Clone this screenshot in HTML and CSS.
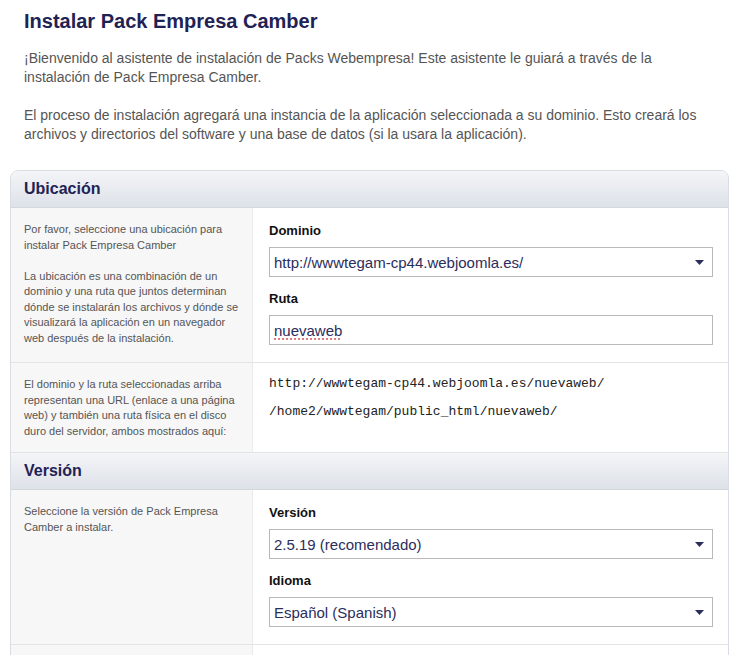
FILE: index.html
```html
<!DOCTYPE html>
<html lang="es">
<head>
  <meta charset="UTF-8" />
  <meta name="viewport" content="width=device-width, initial-scale=1.0"/>
  <title>Instalar Pack Empresa Camber</title>
  <link rel="stylesheet" href="styles.css">
</head>
<body>

  <div class="page">
    <div class="intro">
      <h1>Instalar Pack Empresa Camber</h1>
      <p>¡Bienvenido al asistente de instalación de Packs Webempresa! Este asistente le guiará a través de la instalación de Pack Empresa Camber.</p>
      <p>El proceso de instalación agregará una instancia de la aplicación seleccionada a su dominio. Esto creará los archivos y directorios del software y una base de datos (si la usara la aplicación).</p>
    </div>

    <div class="panel">
      <!-- Ubicacion -->
      <div class="panel-header">Ubicación</div>

      <div class="row">
        <div class="help">
          <p>Por favor, seleccione una ubicación para instalar Pack Empresa Camber</p>
          <p>La ubicación es una combinación de un dominio y una ruta que juntos determinan dónde se instalarán los archivos y dónde se visualizará la aplicación en un navegador web después de la instalación.</p>
        </div>
        <div class="fields">
          <label>Dominio</label>
          <div class="select">
            <span>http://wwwtegam-cp44.webjoomla.es/</span>
            <svg class="arrow" width="9" height="5" viewBox="0 0 9 5"><path d="M0 0h9L4.5 5z" fill="#2b2d5c"/></svg>
          </div>
          <label>Ruta</label>
          <div class="input"><span class="misspelled">nuevaweb</span></div>
        </div>
      </div>

      <div class="row">
        <div class="help">
          <p>El dominio y la ruta seleccionadas arriba representan una URL (enlace a una página web) y también una ruta física en el disco duro del servidor, ambos mostrados aquí:</p>
        </div>
        <div class="fields paths">
          <div class="path">http://wwwtegam-cp44.webjoomla.es/nuevaweb/</div>
          <div class="path">/home2/wwwtegam/public_html/nuevaweb/</div>
        </div>
      </div>

      <!-- Version -->
      <div class="panel-header">Versión</div>

      <div class="row">
        <div class="help">
          <p>Seleccione la versión de Pack Empresa Camber a instalar.</p>
        </div>
        <div class="fields">
          <label>Versión</label>
          <div class="select">
            <span>2.5.19 (recomendado)</span>
            <svg class="arrow" width="9" height="5" viewBox="0 0 9 5"><path d="M0 0h9L4.5 5z" fill="#2b2d5c"/></svg>
          </div>
          <label>Idioma</label>
          <div class="select">
            <span>Español (Spanish)</span>
            <svg class="arrow" width="9" height="5" viewBox="0 0 9 5"><path d="M0 0h9L4.5 5z" fill="#2b2d5c"/></svg>
          </div>
        </div>
      </div>

      <div class="row">
        <div class="help"><p>&nbsp;</p></div>
        <div class="fields"></div>
      </div>
    </div>
  </div>

</body>
</html>
```

FILE: styles.css
```css
body {
  font-family: 'Liberation Sans', Arial, Helvetica, sans-serif;
  background-color: #fff;
  margin: 0;
  padding: 0;
}

.page {
  padding: 9px 9px 0 10px;
}

.intro {
  padding: 0 14px;
}

h1 {
  margin: 0 0 16px;
  font-size: 20px;
  line-height: 24px;
  color: #1f2254;
}

.intro p {
  margin: 0 0 19px;
  font-size: 14px;
  line-height: 19px;
  color: #555;
}

.intro p:last-child {
  margin-bottom: 26px;
}

.panel {
  border: 1px solid #d9dce2;
  border-radius: 8px 8px 0 0;
  overflow: hidden;
}

.panel-header {
  height: 36px;
  line-height: 36px;
  padding-left: 13px;
  font-size: 16px;
  font-weight: bold;
  color: #1f2254;
  background: linear-gradient(#f4f5f8, #dde1e8);
  border-bottom: 1px solid #d3d7de;
}

.row {
  display: grid;
  grid-template-columns: 242px 1fr;
  border-bottom: 1px solid #e4e4e4;
}

.row:last-child {
  border-bottom: none;
}

.help {
  background-color: #f7f7f7;
  border-right: 1px solid #ebebeb;
  padding: 14px 10px 13px 13px;
}

.help p {
  margin: 0 0 15.5px;
  font-size: 11px;
  line-height: 15.5px;
  color: #555;
}

.help p:last-child {
  margin-bottom: 0;
}

.fields {
  padding: 14px 15px 17px 16px;
}

.fields label {
  display: block;
  font-size: 13px;
  font-weight: bold;
  line-height: 18px;
  color: #111;
  margin-bottom: 7px;
}

.select,
.input {
  display: flex;
  align-items: center;
  justify-content: space-between;
  height: 28px;
  padding: 0 8px 0 4px;
  border: 1px solid #b9b9b9;
  background-color: #fff;
  font-size: 15px;
  color: #2b2d5c;
  margin-bottom: 13px;
}

.fields .select:last-child,
.fields .input:last-child {
  margin-bottom: 0;
}

.misspelled {
  text-decoration: underline dotted #d9534f;
  text-underline-offset: 3px;
}

.paths {
  padding-top: 11px;
}

.path {
  font-family: 'Liberation Mono', 'Courier New', monospace;
  font-size: 13px;
  line-height: 20px;
  color: #222;
  margin-bottom: 8px;
}
```
